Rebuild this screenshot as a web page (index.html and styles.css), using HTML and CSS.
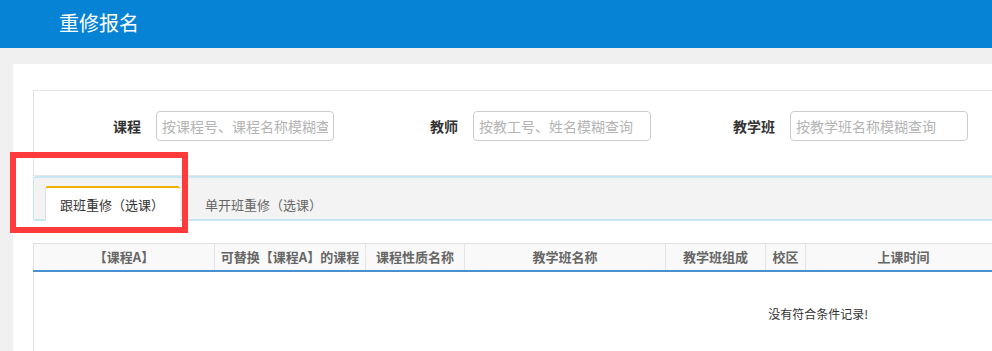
FILE: index.html
```html
<!DOCTYPE HTML>
<html>
    <head>
        <meta http-equiv="Content-Type" content="text/html; charset=UTF-8"/>
        <title>重修报名</title>
        <link rel="stylesheet" href="styles.css">
    </head>
    <body>
        <div class="topbar"><span class="title">重修报名</span></div>
        <div class="page">
            <div class="panel">
                <div class="query">
                    <div class="field">
                        <label>课程</label>
                        <input type="text" placeholder="按课程号、课程名称模糊查询">
                    </div>
                    <div class="field">
                        <label>教师</label>
                        <input type="text" placeholder="按教工号、姓名模糊查询">
                    </div>
                    <div class="field">
                        <label>教学班</label>
                        <input type="text" placeholder="按教学班名称模糊查询">
                    </div>
                </div>
                <div class="tabs">
                    <div class="tab active">跟班重修（选课）</div>
                    <div class="tab">单开班重修（选课）</div>
                </div>
                <table class="grid">
                    <colgroup>
                        <col style="width:181px">
                        <col style="width:151px">
                        <col style="width:99px">
                        <col style="width:201px">
                        <col style="width:100px">
                        <col style="width:40px">
                        <col style="width:196px">
                        <col style="width:601px">
                    </colgroup>
                    <thead>
                        <tr>
                            <th>【课程A】</th>
                            <th>可替换【课程A】的课程</th>
                            <th>课程性质名称</th>
                            <th>教学班名称</th>
                            <th>教学班组成</th>
                            <th>校区</th>
                            <th>上课时间</th>
                            <th></th>
                        </tr>
                    </thead>
                    <tbody>
                        <tr>
                            <td class="empty" colspan="8">没有符合条件记录!</td>
                        </tr>
                    </tbody>
                </table>
            </div>
        </div>
        <div class="mark"></div>
    </body>
</html>
```

FILE: styles.css
```css
html{
    background-color:#f0f0f0;
}
body{
    margin:0;
    overflow:hidden;
    font-family:"Noto Sans CJK SC","Liberation Sans",sans-serif;
    color:#333;
    position:relative;
}
.topbar{
    height:48px;
    background:#0683d4;
    padding-left:59px;
    display:flex;
    align-items:center;
}
.title{
    color:#fff;
    font-size:20px;
    line-height:24px;
    margin-top:-2px;
}
.page{
    width:1700px;
    padding:16px 0 0 13px;
}
.panel{
    background:#fff;
    padding:26px 0 0 20px;
    height:400px;
}
.query{
    border:1px solid #e4e4e4;
    border-right:none;
    padding:20px 0 34px 0;
    display:flex;
    gap:17px;
}
.field{
    display:flex;
    align-items:center;
    width:300px;
}
.field label{
    width:107px;
    padding-right:15px;
    text-align:right;
    font-size:14px;
    font-weight:bold;
    line-height:20px;
}
.field input{
    width:178px;
    height:30px;
    box-sizing:border-box;
    border:1px solid #ccc;
    border-radius:4px;
    padding:0 5px;
    font-family:inherit;
    font-size:14px;
    color:#555;
    outline:none;
}
.field input::placeholder{
    color:#b4b4b4;
}
.tabs{
    height:41px;
    border:1px solid #c6e6f1;
    border-top-width:2px;
    border-bottom-width:2px;
    border-right:none;
    border-radius:3px 0 0 3px;
    background:#f3f3f3;
    display:flex;
    align-items:flex-end;
    padding-left:11px;
    gap:10px;
}
.tab{
    height:33px;
    padding:0 16px 0 15px;
    font-size:13px;
    line-height:33px;
    color:#666;
    margin-bottom:-2px;
    border-top:2px solid transparent;
}
.tab.active{
    background:#fff;
    color:#333;
    border-top-color:#efb000;
    border-left:1px solid #e0e0e0;
    border-radius:3px 3px 0 0;
    padding-left:14px;
}
.grid{
    margin-top:22px;
    border-collapse:collapse;
    table-layout:fixed;
    width:1570px;
    border-left:1px solid #e2e2e2;
}
.grid th{
    height:26px;
    background:#f9f9f9;
    border-top:1px solid #e0e0e0;
    border-right:1px solid #e4e4e4;
    border-bottom:2px solid #4a8fd2;
    font-size:13px;
    font-weight:bold;
    color:#666;
    line-height:18px;
    padding:0 4px;
    white-space:nowrap;
    overflow:hidden;
}
.grid td.empty{
    height:80px;
    text-align:center;
    font-size:12px;
    color:#333;
}
.mark{
    position:absolute;
    left:10px;
    top:152px;
    width:166px;
    height:69px;
    border:6px solid #ff3b3b;
}
```
